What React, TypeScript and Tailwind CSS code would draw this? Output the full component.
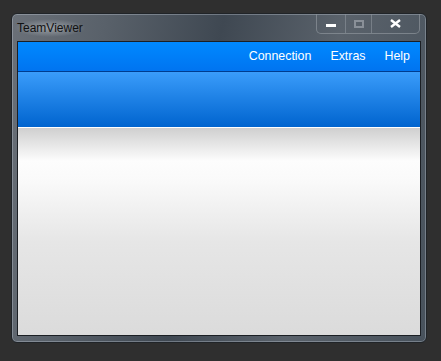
export default function App() {
  return (
    <div className="h-[361px] w-[441px] bg-[#2f2f2f] pl-[11px] pt-[13px] font-['Liberation_Sans',Arial,sans-serif]">
      <div className="relative flex h-[330px] w-[416px] flex-col rounded-[6px] border border-[#202428] bg-[linear-gradient(100deg,#6a7078_0%,#59616a_20%,#3f4852_45%,#5a626b_70%,#48525c_100%)] px-[5px] pb-[6px] shadow-[inset_0_0_0_1px_rgba(200,210,220,0.35)]">
        {/* title bar */}
        <div className="flex h-[27px] items-center">
          <span className="ml-[-3px] mt-[1px] rounded-full bg-[radial-gradient(ellipse_at_center,rgba(200,205,210,0.55)_0%,rgba(200,205,210,0)_70%)] px-[3px] text-[12px] text-[#111]">
            TeamViewer
          </span>
        </div>

        {/* caption buttons */}
        <div className="absolute right-[6px] top-0 flex h-[20px] overflow-hidden rounded-b-[5px] border border-t-0 border-[#8d949c]/70">
          <div className="flex w-[29px] items-center justify-center border-r border-[#8d949c]/60">
            <div className="mt-[4px] h-[3px] w-[10px] bg-white" />
          </div>
          <div className="flex w-[26px] items-center justify-center border-r border-[#8d949c]/60">
            <div className="h-[8px] w-[10px] border-2 border-[#8a9098]" />
          </div>
          <div className="flex w-[47px] items-center justify-center">
            <svg width="11" height="9" viewBox="0 0 11 9">
              <path d="M1 1 L10 8 M10 1 L1 8" stroke="#fff" strokeWidth="2.4" />
            </svg>
          </div>
        </div>

        {/* client area */}
        <div className="flex flex-1 flex-col border border-[#1b1f24] bg-[#dcdcdc]">
          <div className="flex h-[30px] items-center justify-end gap-[19px] border-b border-[#003c8f] bg-[linear-gradient(#0089ff,#0074f0)] pr-[10px] text-[12.4px] text-white">
            <span>Connection</span>
            <span>Extras</span>
            <span>Help</span>
          </div>
          <div className="h-[56px] border-b border-white bg-[linear-gradient(#3a9cfa,#0064cf)]" />
          <div className="flex-1 bg-[linear-gradient(#cfcfcf_0%,#fdfdfd_16%,#fafafa_25%,#e6e6e6_55%,#dbdbdb_100%)]" />
        </div>
      </div>
    </div>
  );
}
